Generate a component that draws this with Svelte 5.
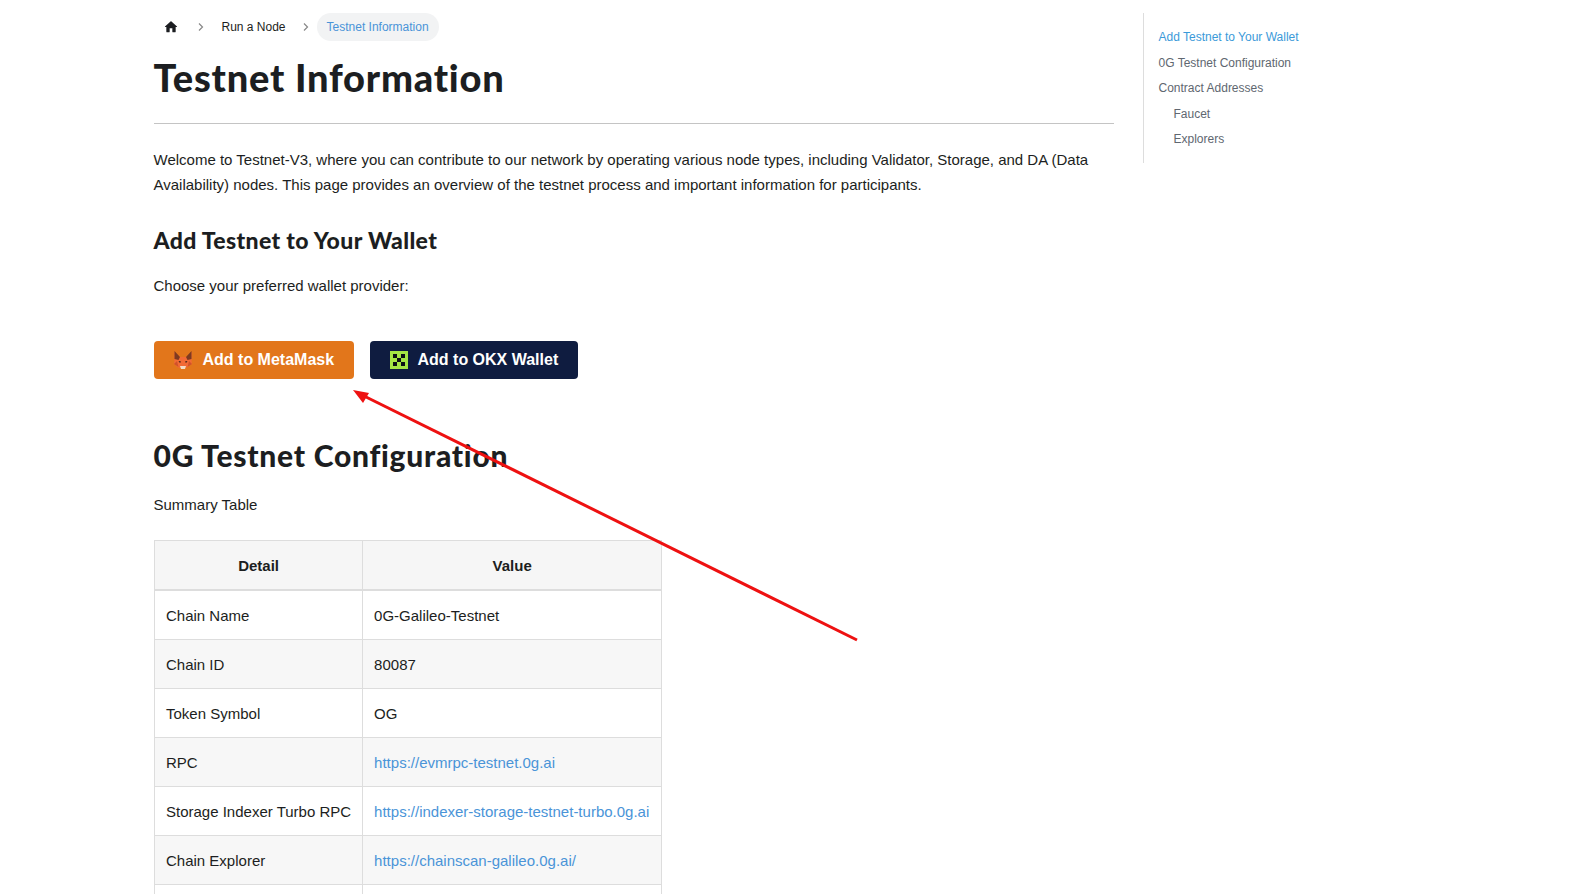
<script>
  const rows = [
    ["Chain Name", "0G-Galileo-Testnet"],
    ["Chain ID", "80087"],
    ["Token Symbol", "OG"],
    ["RPC", "https://evmrpc-testnet.0g.ai", true],
    ["Storage Indexer Turbo RPC", "https://indexer-storage-testnet-turbo.0g.ai", true],
    ["Chain Explorer", "https://chainscan-galileo.0g.ai/", true],
    ["", ""]
  ];
</script>

<div class="page">
  <main>
    <nav class="crumbs">
      <span class="home">
        <svg viewBox="0 0 24 24" width="16" height="16"><path d="M10 19v-5h4v5c0 .55.45 1 1 1h3c.55 0 1-.45 1-1v-7h1.7c.46 0 .68-.57.33-.87L12.67 3.6c-.38-.34-.96-.34-1.34 0l-8.36 7.53c-.34.3-.13.87.33.87H5v7c0 .55.45 1 1 1h3c.55 0 1-.45 1-1z" fill="#1c1e21"/></svg>
      </span>
      <svg class="sep" viewBox="0 0 8 10" width="8" height="10"><path d="M2 1.500L5.500 5 2 8.500" fill="none" stroke="#888" stroke-width="1.200"/></svg>
      <span class="crumb">Run a Node</span>
      <svg class="sep" viewBox="0 0 8 10" width="8" height="10"><path d="M2 1.500L5.500 5 2 8.500" fill="none" stroke="#888" stroke-width="1.200"/></svg>
      <span class="crumb active">Testnet Information</span>
    </nav>

    <h1>Testnet Information</h1>
    <hr />

    <p class="intro">Welcome to Testnet-V3, where you can contribute to our network by operating various node types, including Validator, Storage, and DA (Data Availability) nodes. This page provides an overview of the testnet process and important information for participants.</p>

    <h3>Add Testnet to Your Wallet</h3>
    <p class="choose">Choose your preferred wallet provider:</p>

    <div class="buttons">
      <button class="mm">
        <svg viewBox="0 0 20 20" width="20" height="20">
          <path d="M1 2l6 5h6l6-5-.4 9 .4 3-2.500 1-1.500 2-3 1-2.500 1-2.500-1-3-1-1.500-2L1 14l.4-3z" fill="#f26a35"/>
          <path d="M1.500 1l5.500 6-1.500 3-4-1z" fill="#7d3a20"/>
          <path d="M18.500 1l-5.500 6 1.500 3 4-1z" fill="#7d3a20"/>
          <path d="M1 14l3-3 1.500 6z" fill="#d0522a"/>
          <path d="M19 14l-3-3-1.500 6z" fill="#d0522a"/>
          <path d="M7 16h6l-1 3h-4z" fill="#f3dcc6"/>
          <path d="M5.500 11l2.500 .5-1 1.500zM14.500 11l-2.500 .5 1 1.500z" fill="#2b1a12"/>
        </svg>
        Add to MetaMask
      </button>
      <button class="okx">
        <svg viewBox="0 0 18 18" width="18" height="18">
          <rect width="18" height="18" fill="#a4e544"/>
          <rect x="3" y="3" width="4" height="4" fill="#0b0f14"/>
          <rect x="11" y="3" width="4" height="4" fill="#0b0f14"/>
          <rect x="7" y="7" width="4" height="4" fill="#0b0f14"/>
          <rect x="3" y="11" width="4" height="4" fill="#0b0f14"/>
          <rect x="11" y="11" width="4" height="4" fill="#0b0f14"/>
        </svg>
        Add to OKX Wallet
      </button>
    </div>

    <h2>0G Testnet Configuration</h2>
    <p class="summary">Summary Table</p>

    <table>
      <thead>
        <tr><th>Detail</th><th>Value</th></tr>
      </thead>
      <tbody>
        {#each rows as r}
          <tr>
            <td>{r[0]}</td>
            <td>{#if r[2]}<a href="#top">{r[1]}</a>{:else}{r[1]}{/if}</td>
          </tr>
        {/each}
      </tbody>
    </table>
  </main>

  <aside>
    <ul>
      <li class="on">Add Testnet to Your Wallet</li>
      <li>0G Testnet Configuration</li>
      <li>Contract Addresses</li>
      <li class="sub">Faucet</li>
      <li class="sub">Explorers</li>
    </ul>
  </aside>

  <svg class="arrow" viewBox="0 0 1586 894" width="1586" height="894">
    <line x1="857" y1="640" x2="362" y2="395" stroke="#ee1111" stroke-width="3" />
    <polygon points="353,390 369,393 363,403" fill="#ee1111" />
  </svg>
</div>

<style>
  :global(body) {
    margin: 0;
    background: #fff;
    overflow: hidden;
  }

  .page {
    position: relative;
    height: 894px;
    overflow: hidden;
    display: flex;
    padding-left: 153.5px;
    font-family: "Liberation Sans", Arial, sans-serif;
    color: #1c1e21;
    box-sizing: border-box;
  }

  main {
    width: 960px;
    flex: none;
  }

  .crumbs {
    display: flex;
    align-items: center;
    height: 28px;
    margin-top: 13px;
    font-size: 12px;
  }
  .home {
    display: flex;
    padding: 0 18px 0 9px;
  }
  .sep {
    flex: none;
  }
  .crumb {
    padding: 0 16px 0 17px;
  }
  .crumb.active {
    background: #f2f3f4;
    color: #4a94d8;
    border-radius: 14px;
    line-height: 28px;
    padding: 0 10px;
    margin-left: 7px;
  }

  h1, h2, h3 {
    font-family: Lato, "Open Sans", sans-serif;
    font-weight: 900;
    font-variant-ligatures: none;
  }

  h1 {
    font-size: 38px;
    line-height: 50px;
    letter-spacing: 0.8px;
    margin: 10.500px 0 0;
    color: #1c1e21;
  }

  hr {
    border: 0;
    border-top: 1px solid #c4c4c4;
    margin: 21.500px 0 0;
  }

  .intro {
    font-size: 15px;
    line-height: 25.4px;
    margin: 23px 0 0;
  }

  h3 {
    font-size: 23px;
    line-height: 30px;
    letter-spacing: 0.35px;
    margin: 27.500px 0 0;
  }

  .choose {
    font-size: 15px;
    line-height: 25px;
    margin: 17.500px 0 0;
  }

  .buttons {
    display: flex;
    gap: 16px;
    margin-top: 43px;
  }
  button {
    display: flex;
    align-items: center;
    gap: 10px;
    height: 38px;
    border: 0;
    border-radius: 4px;
    color: #fff;
    font-family: "Liberation Sans", Arial, sans-serif;
    font-weight: 700;
    font-size: 16px;
    padding: 0 18px 0 19px;
  }
  .mm {
    background: #e2761b;
    width: 200px;
  }
  .okx {
    background: #0f1c40;
    width: 208px;
    padding-left: 20px;
  }

  h2 {
    font-size: 30px;
    line-height: 40px;
    letter-spacing: 0.75px;
    margin: 56px 0 0;
  }

  .summary {
    font-size: 15px;
    line-height: 25px;
    margin: 17px 0 0;
  }

  table {
    border-collapse: collapse;
    margin-top: 23px;
    margin-left: 0.5px;
    font-size: 15px;
  }
  th, td {
    border: 1px solid #dddddd;
    padding: 0 11px;
    height: 49px;
    box-sizing: border-box;
    text-align: left;
  }
  td {
    padding-top: 1px;
  }
  td:last-child {
    padding-right: 12px;
  }
  th {
    background: #f6f6f6;
    text-align: center;
    font-weight: 700;
    height: 50px;
    border-bottom-width: 2px;
  }
  tbody tr:nth-child(even) {
    background: #f7f7f7;
  }
  a {
    color: #4a94d8;
    text-decoration: none;
  }

  aside {
    margin-left: 29px;
    margin-top: 13px;
    height: 150px;
    box-sizing: border-box;
    border-left: 1px solid #dddddd;
    padding: 12px 0 0 15px;
    font-size: 12px;
    color: #606770;
  }
  ul {
    list-style: none;
    margin: 0;
    padding: 0;
  }
  li {
    line-height: 25.5px;
    white-space: nowrap;
  }
  li.on {
    color: #3b9ad9;
  }
  li.sub {
    padding-left: 15px;
  }

  .arrow {
    position: absolute;
    left: 0;
    top: 0;
    pointer-events: none;
  }
</style>
